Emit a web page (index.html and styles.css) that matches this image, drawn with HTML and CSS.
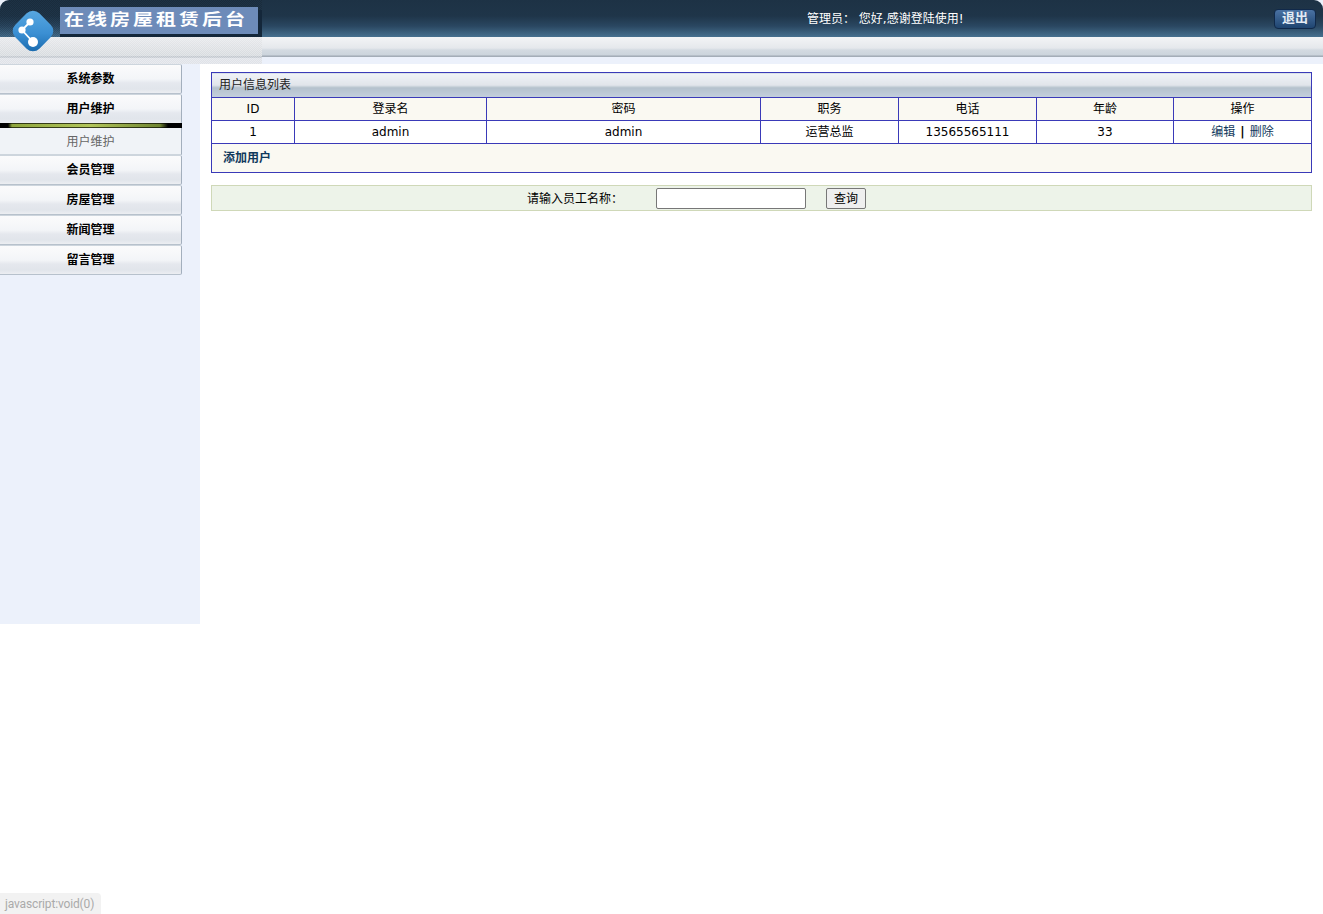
FILE: index.html
```html
<!DOCTYPE html>
<html lang="zh">
<head>
<meta charset="utf-8">
<title>在线房屋租赁后台</title>
<link rel="stylesheet" href="styles.css">
</head>
<body>
<header class="header">
  <div class="top">
    <div class="brand"><div class="banner"><span class="banner-text">在线房屋租赁后台</span></div></div>
    <div class="welcome">管理员：&nbsp;您好,感谢登陆使用!</div>
    <a class="logout" href="javascript:void(0)">退出</a>
  </div>
  <div class="strip"></div>
  <svg class="logo" width="48" height="48" viewBox="0 0 48 48" aria-hidden="true">
    <defs>
      <linearGradient id="lg" x1="0" y1="0" x2="1" y2="1">
        <stop offset="0" stop-color="#5cabe2"/>
        <stop offset="0.55" stop-color="#3b8fd3"/>
        <stop offset="1" stop-color="#1565a8"/>
      </linearGradient>
    </defs>
    <rect x="7" y="7" width="34" height="34" rx="9" transform="rotate(45 24 24)" fill="url(#lg)"/>
    <path d="M21 15 L13 23 L24 35" fill="none" stroke="#fff" stroke-width="1.8"/>
    <circle cx="21" cy="15" r="3.6" fill="#fff"/>
    <circle cx="13" cy="23" r="3.6" fill="#fff"/>
    <circle cx="24" cy="35" r="5" fill="#fff"/>
  </svg>
</header>
<div class="body">
  <nav class="sidebar">
    <a class="nav-btn" href="#">系统参数</a>
    <a class="nav-btn" href="#">用户维护</a>
    <div class="nav-bar"></div>
    <a class="nav-sub" href="#">用户维护</a>
    <a class="nav-btn" href="#">会员管理</a>
    <a class="nav-btn" href="#">房屋管理</a>
    <a class="nav-btn" href="#">新闻管理</a>
    <a class="nav-btn" href="#">留言管理</a>
  </nav>
  <main class="main">
    <table class="list">
      <colgroup>
        <col class="c1"><col class="c2"><col class="c3"><col class="c4"><col class="c5"><col class="c6"><col class="c7">
      </colgroup>
      <tr class="r-title"><td colspan="7">用户信息列表</td></tr>
      <tr class="r-head"><td>ID</td><td>登录名</td><td>密码</td><td>职务</td><td>电话</td><td>年龄</td><td>操作</td></tr>
      <tr class="r-data"><td>1</td><td>admin</td><td>admin</td><td>运营总监</td><td>13565565111</td><td>33</td><td><a href="#">编辑</a><span class="pipe">|</span><a href="#">删除</a></td></tr>
      <tr class="r-foot"><td colspan="7"><a href="#">添加用户</a></td></tr>
    </table>
    <form class="search">
      <label class="search-label" for="q">请输入员工名称：</label>
      <input class="search-input" id="q" type="text">
      <button class="search-btn" type="button">查询</button>
    </form>
  </main>
</div>
<div class="status">javascript:void(0)</div>
</body>
</html>
```
FILE: styles.css
```css
* { box-sizing: border-box; }
html, body { margin: 0; padding: 0; background: #fff; }
body {
  font-family: "DejaVu Sans", "Noto Sans CJK SC", sans-serif;
  font-size: 12px;
  line-height: 14px;
  color: #000;
  position: relative;
  height: 914px;
  overflow: hidden;
}
a { text-decoration: none; color: inherit; }

.header { position: relative; height: 64px; background: #ecf1fb; }
.top {
  height: 37px;
  display: flex;
  align-items: flex-start;
  border-radius: 9px 9px 0 0;
  background: linear-gradient(#1d3245 0, #1f3549 16px, #2a4761 26px, #47708f 37px);
}
.brand {
  width: 262px;
  height: 37px;
  padding: 7px 0 0 60px;
  flex: none;
  border-radius: 9px 0 0 0;
  background: repeating-conic-gradient(rgba(0,0,0,.14) 0 25%, transparent 0 50%) 0 0 / 2px 2px;
}
.banner {
  width: 198px;
  height: 27px;
  background: #6d8bb9;
  box-shadow: 4px 3px 0 #14273a, 0 3px 0 #14273a;
  color: #fff;
  padding-left: 4px;
  white-space: nowrap;
}
.banner-text {
  display: inline-block;
  font-family: "Noto Sans CJK SC", serif;
  font-weight: 700;
  font-size: 20px;
  line-height: 24px;
  letter-spacing: 3px;
  transform: scaleY(0.78);
  transform-origin: 0 50%;
}
.welcome { color: #fff; padding-top: 12px; margin-left: 545px; width: 467px; flex: none; white-space: nowrap; }
.logout {
  width: 42px;
  height: 20px;
  margin-top: 9px;
  border: 1px solid #10294a;
  border-radius: 4px;
  background: linear-gradient(#4a72a3, #1f4570);
  color: #e3ebf4;
  font-weight: bold;
  font-size: 13px;
  line-height: 16px;
  text-align: center;
}
.strip {
  height: 20px;
  background: linear-gradient(#f3f4f6 0, #e5e8ec 11px, #d3dae1 13px, #ccd4dc 18px, #a0a9b4 19px, #a8b1bb 20px);
}
.header::after {
  content: "";
  position: absolute;
  left: 0;
  top: 37px;
  width: 262px;
  height: 27px;
  background:
    repeating-conic-gradient(rgba(255,255,255,.3) 0 25%, transparent 0 50%) 0 0 / 2px 2px,
    linear-gradient(#e8e9ec 0, #d6dade 19px, #aeb5be 20px, #dfe2e8 21px);
}
.logo { position: absolute; left: 9px; top: 7px; z-index: 1; }

.body { display: flex; align-items: flex-start; }
.sidebar { width: 200px; height: 560px; background: #ecf1fb; flex: none; }
.nav-btn, .nav-sub {
  display: block;
  width: 182px;
  text-align: center;
}
.nav-btn {
  height: 30px;
  padding-top: 7px;
  font-weight: bold;
  color: #000;
  border-top: 1px solid #cdd5dd;
  border-right: 1px solid #a3afbd;
  border-bottom: 1px solid #b7c1cc;
  border-radius: 0 2px 2px 0;
  background: linear-gradient(#fbfbfc 0, #f3f5f8 14px, #e5e8ee 18px, #e1e5eb 24px, #eceef2 28px);
}
.nav-bar {
  width: 182px;
  height: 5px;
  margin-top: -1px;
  background:
    linear-gradient(#000 0, transparent 1.5px, transparent 3.5px, #000 5px),
    linear-gradient(90deg, #000 0, #000 8px, #8fa53c 12px, #b3c65a 90px, #6f8430 160px, #000 168px, #000 100%);
}
.nav-sub {
  height: 27px;
  padding-top: 7px;
  color: #666;
  background: #f0f3f7;
  border-right: 1px solid #a3afbd;
  border-bottom: 1px solid #cdd5dd;
}

.main { flex: 1; padding: 8px 11px 0; }
.list {
  width: 1100px;
  table-layout: fixed;
  border-collapse: collapse;
  border: 1px solid #3a3ab8;
}
.list td {
  border: 1px solid #3a3ab8;
  padding: 0;
  text-align: center;
}
.c1 { width: 83px; } .c2 { width: 192px; } .c3 { width: 274px; }
.c4 { width: 138px; } .c5 { width: 138px; } .c6 { width: 137px; } .c7 { width: 138px; }
.r-title td {
  height: 25px;
  text-align: left;
  padding: 0 0 0 7px;
  color: #222;
  background: linear-gradient(#f0f3f7 0, #e0e4ea 12px, #b4c1cc 14px, #c4d0dd 24px);
}
.r-head td { height: 23px; background: #faf9f2; }
.r-data td { height: 23px; background: #fff; }
.r-data a { color: #10395c; }
.pipe { margin: 0 5px; color: #000; font-weight: bold; }
.r-foot td {
  height: 29px;
  text-align: left;
  padding-left: 11px;
  background: #faf9f2;
  font-weight: bold;
}
.r-foot a { color: #10395c; }

.search {
  margin-top: 12px;
  width: 1101px;
  height: 26px;
  display: flex;
  align-items: center;
  padding-left: 315px;
  background: #edf3e9;
  border: 1px solid #cfd8b8;
}
.search-label { width: 129px; flex: none; padding-top: 2px; }
.search-input {
  width: 150px;
  height: 21px;
  border: 1px solid #777;
  border-radius: 2px;
  background: #fff;
  padding: 0;
  margin: 0;
}
.search-btn {
  width: 40px;
  height: 21px;
  margin: 0 0 0 20px;
  padding: 2px 0 0;
  border: 1px solid #777;
  border-radius: 2px;
  background: #efefef;
  font: inherit;
  color: #000;
}

.status {
  position: absolute;
  left: 0;
  bottom: 0;
  height: 21px;
  width: 101px;
  padding: 1px 0 0 5px;
  line-height: 21px;
  letter-spacing: -0.15px;
  background: #f2f2f2;
  border-top-right-radius: 4px;
  color: #aaa;
  font-family: Roboto, sans-serif;
  white-space: nowrap;
}
```
